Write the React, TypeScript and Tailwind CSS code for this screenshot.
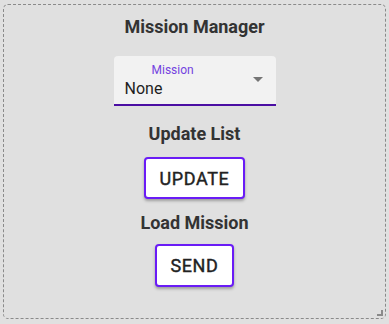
import React from "react";

export default function App() {
  return (
    <div
      className="w-[389px] h-[324px] bg-[#e0e0e0] pl-[3px] pt-[4px]"
      style={{ fontFamily: "Roboto, 'Liberation Sans', sans-serif" }}
    >
      <div className="relative w-[383px] h-[315px] border border-dashed border-[#8a8a8a] rounded-[5px] flex flex-col items-center">
        <div className="mt-[10px] text-[18px] leading-[24px] font-bold text-[#333333]">
          Mission Manager
        </div>
        <div className="mt-[17px] relative w-[162px] h-[50px] bg-[#f2f2f2] rounded-t-[4px] border-b-2 border-[#4b0fa3]">
          <div className="absolute left-[38px] top-[7px] text-[12px] leading-[14px] text-[#7443e0]">
            Mission
          </div>
          <div className="absolute left-[11px] top-[23px] text-[16px] leading-[20px] text-[#1e1e1e]">
            None
          </div>
          <svg
            className="absolute left-[139px] top-[21px]"
            width="10"
            height="6"
            viewBox="0 0 10 6"
          >
            <path d="M0 0 L10 0 L5 5 Z" fill="#757575" />
          </svg>
        </div>
        <div className="mt-[16px] text-[18px] leading-[24px] font-bold text-[#333333]">
          Update List
        </div>
        <button className="mt-[11px] h-[42px] w-[101px] bg-white border-2 border-[#6a1cf6] rounded-[4px] shadow-[0_2px_3px_rgba(0,0,0,0.3)] text-[18px] font-normal tracking-[0.6px] [-webkit-text-stroke:0.4px_#222222] text-[#222222]">
          UPDATE
        </button>
        <div className="mt-[12px] text-[18px] leading-[24px] font-bold text-[#333333]">
          Load Mission
        </div>
        <button className="mt-[9px] h-[43px] w-[79px] bg-white border-2 border-[#6a1cf6] rounded-[4px] shadow-[0_2px_3px_rgba(0,0,0,0.3)] text-[18px] font-normal tracking-[0.6px] [-webkit-text-stroke:0.4px_#222222] text-[#222222]">
          SEND
        </button>
        <svg
          className="absolute right-[1px] bottom-[1px]"
          width="8"
          height="8"
          viewBox="0 0 8 8"
        >
          <path d="M1 6 H6 V1" stroke="#8a8a8a" strokeWidth="2" fill="none" />
        </svg>
      </div>
    </div>
  );
}
